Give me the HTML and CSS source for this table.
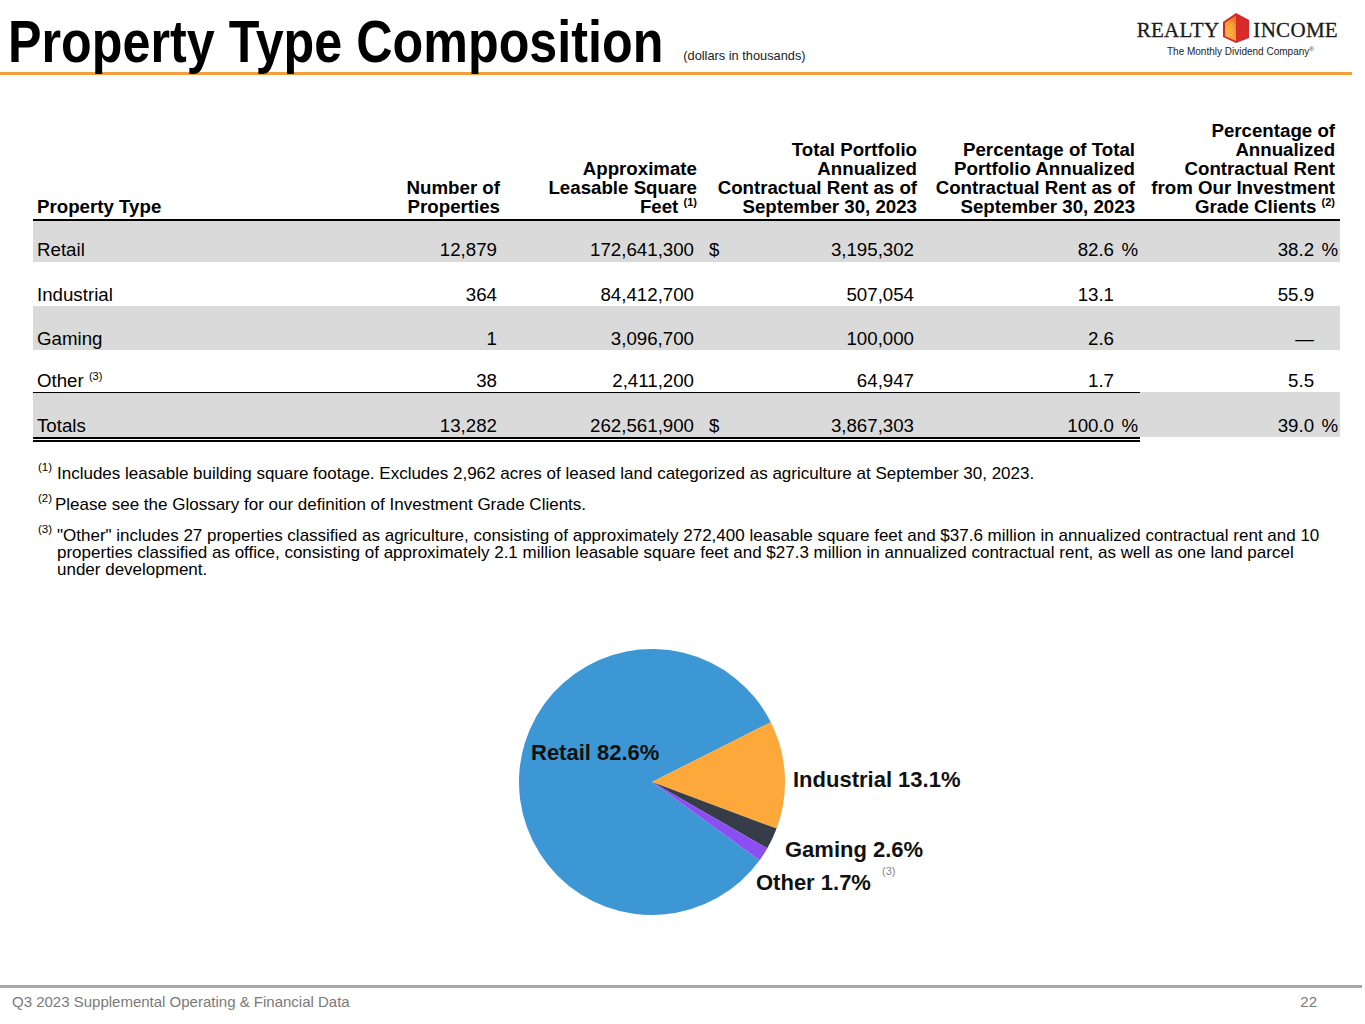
FILE: index.html
```html
<!DOCTYPE html>
<html lang="en">
<head>
<meta charset="utf-8">
<title>Property Type Composition</title>
<link rel="stylesheet" href="styles.css">
</head>
<body>
<div class="page">
  <header class="top">
    <div class="title-wrap">
      <h1 class="title">Property Type Composition</h1>
      <span class="unit">(dollars in thousands)</span>
    </div>
    <div class="logo">
      <div class="logo-main">
        <span class="logo-word">REALTY</span>
        <svg class="logo-icon" width="28" height="32" viewBox="0 0 28 32" aria-hidden="true">
          <defs>
            <linearGradient id="lg" x1="0" y1="1" x2="1" y2="0">
              <stop offset="0" stop-color="#f7c04a"/>
              <stop offset="0.6" stop-color="#f39a2d"/>
              <stop offset="1" stop-color="#e8602a"/>
            </linearGradient>
          </defs>
          <polygon points="1,10 14,1 27,8 27,26 14,31 1,25" fill="#d7262b"/>
          <polygon points="3,11 14,3.5 14,29 3,24" fill="url(#lg)"/>
          <path d="M4,22 L13,12 M5,24 L13,15 M7,25 L13,19 M4,18 L12,10" stroke="#fbd37a" stroke-width="0.8" opacity="0.7"/>
          <polygon points="14,3.5 25,9 25,25 14,29" fill="#d92b2b"/>
        </svg>
        <span class="logo-word">INCOME</span>
      </div>
      <div class="logo-tag">The Monthly Dividend Company<sup>®</sup></div>
    </div>
  </header>

  <main class="content">
    <table class="data">
      <colgroup>
        <col class="c-name"><col class="c-num"><col class="c-sqft"><col class="c-dol"><col class="c-rent"><col class="c-pct"><col class="c-sign"><col class="c-ig"><col class="c-sign">
      </colgroup>
      <thead>
        <tr>
          <th class="left">Property Type</th>
          <th>Number of<br>Properties</th>
          <th>Approximate<br>Leasable Square<br>Feet <sup>(1)</sup></th>
          <th colspan="2">Total Portfolio<br>Annualized<br>Contractual Rent as of<br>September 30, 2023</th>
          <th colspan="2" class="pr5">Percentage of Total<br>Portfolio Annualized<br>Contractual Rent as of<br>September 30, 2023</th>
          <th colspan="2" class="pr5">Percentage of<br>Annualized<br>Contractual Rent<br>from Our Investment<br>Grade Clients <sup>(2)</sup></th>
        </tr>
      </thead>
      <tbody>
        <tr class="shade r-retail">
          <td class="left">Retail</td><td>12,879</td><td>172,641,300</td><td class="dol">$</td><td>3,195,302</td><td>82.6</td><td class="sign">%</td><td>38.2</td><td class="sign">%</td>
        </tr>
        <tr class="r-mid">
          <td class="left">Industrial</td><td>364</td><td>84,412,700</td><td class="dol"></td><td>507,054</td><td>13.1</td><td class="sign"></td><td>55.9</td><td class="sign"></td>
        </tr>
        <tr class="shade r-mid">
          <td class="left">Gaming</td><td>1</td><td>3,096,700</td><td class="dol"></td><td>100,000</td><td>2.6</td><td class="sign"></td><td>—</td><td class="sign"></td>
        </tr>
        <tr class="sub">
          <td class="left">Other <sup>(3)</sup></td><td>38</td><td>2,411,200</td><td class="dol"></td><td>64,947</td><td>1.7</td><td class="sign"></td><td class="nob">5.5</td><td class="sign nob"></td>
        </tr>
        <tr class="shade total">
          <td class="left">Totals</td><td>13,282</td><td>262,561,900</td><td class="dol">$</td><td>3,867,303</td><td>100.0</td><td class="sign">%</td><td class="nob">39.0</td><td class="sign nob">%</td>
        </tr>
      </tbody>
    </table>

    <div class="notes">
      <div class="note"><sup class="mark">(1)</sup><p>Includes leasable building square footage. Excludes 2,962 acres of leased land categorized as agriculture at September 30, 2023.</p></div>
      <div class="note"><sup class="mark m2">(2)</sup><p>Please see the Glossary for our definition of Investment Grade Clients.</p></div>
      <div class="note"><sup class="mark">(3)</sup><p>"Other" includes 27 properties classified as agriculture, consisting of approximately 272,400 leasable square feet and $37.6 million in annualized contractual rent and 10 properties classified as office, consisting of approximately 2.1 million leasable square feet and $27.3 million in annualized contractual rent, as well as one land parcel under development.</p></div>
    </div>

    <div class="chart">
      <svg width="480" height="290" viewBox="0 0 480 290" role="img" aria-label="Property type pie chart">
        <path d="M152,142 L259.6,220.2 A133,133 0 1 1 270.8,82.2 Z" fill="#3d97d4"/>
        <path d="M152,142 L270.8,82.2 A133,133 0 0 1 276.6,188.6 Z" fill="#fca83a"/>
        <path d="M152,142 L276.6,188.6 A133,133 0 0 1 267.3,208.3 Z" fill="#363c48"/>
        <path d="M152,142 L267.3,208.3 A133,133 0 0 1 259.6,220.2 Z" fill="#8b4ef0"/>
        <text class="lbl" x="31" y="120">Retail 82.6%</text>
        <text class="lbl" x="293" y="147">Industrial 13.1%</text>
        <text class="lbl" x="285" y="217">Gaming 2.6%</text>
        <text class="lbl" x="256" y="250">Other 1.7%</text>
        <text class="lbl-sup" x="382" y="235">(3)</text>
      </svg>
    </div>
  </main>

  <footer class="foot">
    <span>Q3 2023 Supplemental Operating &amp; Financial Data</span>
    <span>22</span>
  </footer>
</div>
</body>
</html>
```

FILE: styles.css
```css
html, body {
  margin: 0;
  padding: 0;
  background: #ffffff;
}

body {
  font-family: "Liberation Sans", Arial, sans-serif;
  color: #000;
}

.page {
  width: 1365px;
  height: 1024px;
  display: flex;
  flex-direction: column;
}

/* Header */
.top {
  width: 1352px;
  height: 72px;
  border-bottom: 3px solid #f3a03c;
  display: flex;
  justify-content: space-between;
  align-items: flex-start;
  box-sizing: content-box;
}

.title-wrap {
  display: flex;
  align-items: baseline;
  padding-left: 8px;
  padding-top: 8px;
}

.title {
  margin: 0 -114px 0 0;
  font-family: "Liberation Sans", Arial, sans-serif;
  font-weight: bold;
  font-size: 59px;
  line-height: 68px;
  white-space: nowrap;
  transform: scaleX(0.852);
  transform-origin: 0 50%;
}

.unit {
  font-size: 12.8px;
  margin-left: 20px;
  color: #222;
  position: relative;
  top: -2px;
}

.logo {
  display: flex;
  flex-direction: column;
  align-items: center;
  padding-top: 12px;
  padding-right: 14px;
}

.logo-main {
  display: flex;
  align-items: center;
  gap: 3px;
}

.logo-word {
  font-family: "Liberation Serif", "Times New Roman", serif;
  font-size: 21px;
  letter-spacing: 0.3px;
  color: #1b1b1b;
  line-height: 24px;
  padding-top: 4px;
  -webkit-text-stroke: 0.3px #1b1b1b;
}

.logo-icon {
  display: block;
}

.logo-tag {
  font-size: 10px;
  color: #222;
  margin-top: 2px;
  padding-left: 6px;
}

.logo-tag sup {
  font-size: 6px;
}

/* Content */
.content {
  flex: 1;
  display: flex;
  flex-direction: column;
}

.data {
  margin-top: 46px;
  margin-left: 33px;
  width: 1307px;
  border-collapse: collapse;
  table-layout: fixed;
  font-size: 18.7px;
}

.c-name { width: 367px; }
.c-num { width: 100px; }
.c-sqft { width: 197px; }
.c-dol { width: 25px; }
.c-rent { width: 195px; }
.c-pct { width: 200px; }
.c-sign { width: 23px; }
.c-ig { width: 177px; }

.data th {
  font-weight: bold;
  text-align: right;
  vertical-align: bottom;
  line-height: 19px;
  padding: 0 0 3px 0;
  border-bottom: 2px solid #000;
  white-space: nowrap;
}

.data th.left { text-align: left; padding-left: 4px; }
.data th.pr5 { padding-right: 5px; }

.data sup {
  font-size: 11px;
  vertical-align: 7px;
  line-height: 0;
}

.data td {
  box-sizing: border-box;
  text-align: right;
  vertical-align: bottom;
  line-height: 19px;
  padding: 0 3px 3px 0;
  white-space: nowrap;
}

.data td.left { text-align: left; padding-left: 4px; }
.data td.dol { text-align: left; padding-left: 12px; padding-right: 0; }
.data td.sign { padding-right: 2px; }

.data tr.shade td { background: #dadada; }

.data tr.r-retail td { height: 42px; }
.data tr.r-mid td { height: 44px; padding-bottom: 2px; }

.data tr.sub td { border-bottom: 1px solid #000; height: 42px; padding-bottom: 2px; }
.data tr.sub td.nob { border-bottom: 1px solid transparent; }

.data tr.total td { border-bottom: 5px double #000; height: 47px; padding-bottom: 2px; }
.data tr.total td.nob { border-bottom: 5px solid #fff; }

/* Notes */
.notes {
  margin-top: 23px;
  margin-left: 38px;
  font-size: 17px;
  line-height: 17px;
}

.note {
  display: flex;
  align-items: flex-start;
  margin-bottom: 14px;
}

.note p {
  margin: 0;
  width: 1276px;
}

.mark {
  flex: 0 0 19px;
  font-size: 11.5px;
  line-height: 11px;
  position: relative;
  top: -3px;
  white-space: nowrap;
}

.mark.m2 { flex-basis: 17px; }

/* Chart */
.chart {
  margin-top: 48px;
  margin-left: 500px;
}

.chart svg { display: block; }

.lbl {
  font-family: "Liberation Sans", Arial, sans-serif;
  font-weight: bold;
  font-size: 22px;
  fill: #111;
}

.lbl-sup {
  font-family: "Liberation Sans", Arial, sans-serif;
  font-size: 11px;
  fill: #888;
}

/* Footer */
.foot {
  width: 1362px;
  border-top: 3px solid #a8a8a8;
  margin-bottom: 13px;
  display: flex;
  justify-content: space-between;
  padding: 5px 45px 0 12px;
  box-sizing: border-box;
  font-size: 15px;
  color: #7a7a7a;
  line-height: 18px;
}
```
